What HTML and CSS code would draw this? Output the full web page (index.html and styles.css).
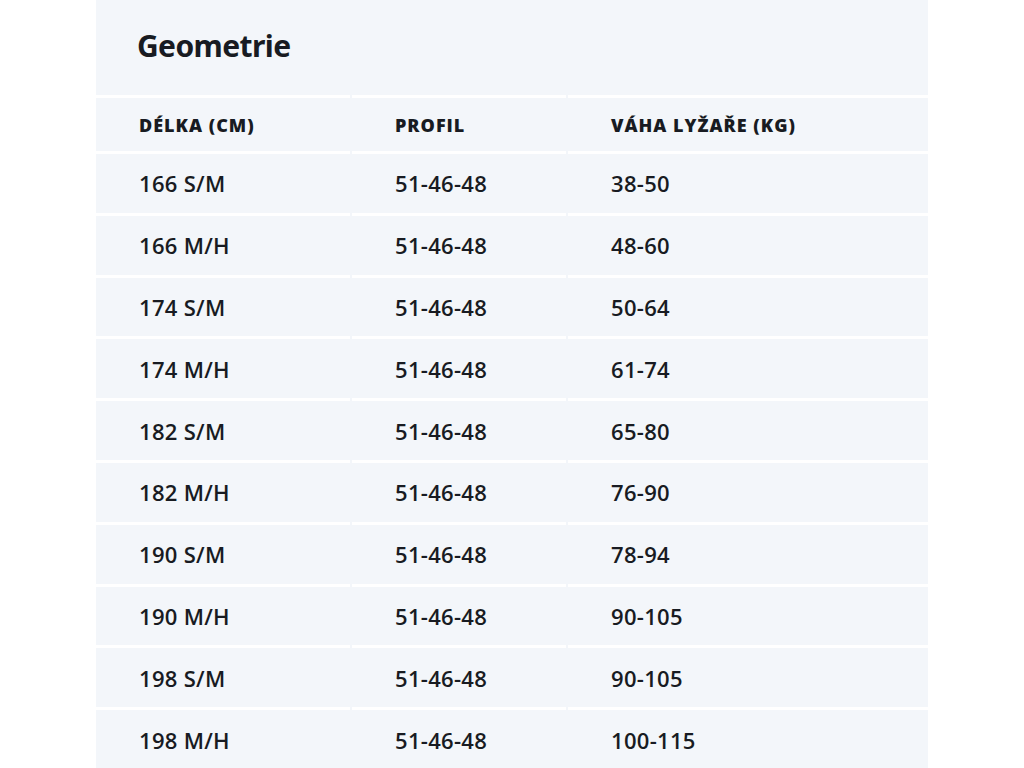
FILE: index.html
```html
<!DOCTYPE html>
<html lang="cs">
<head>
<meta charset="utf-8">
<title>Geometrie</title>
<link rel="stylesheet" href="styles.css">
</head>
<body>
<section class="panel">
  <h2 class="title">Geometrie</h2>
  <table class="geo">
    <colgroup>
      <col class="c1"><col class="c2"><col class="c3">
    </colgroup>
    <thead>
      <tr><th>DÉLKA (CM)</th><th>PROFIL</th><th>VÁHA LYŽAŘE (KG)</th></tr>
    </thead>
    <tbody>
      <tr><td>166 S/M</td><td>51-46-48</td><td>38-50</td></tr>
      <tr><td>166 M/H</td><td>51-46-48</td><td>48-60</td></tr>
      <tr><td>174 S/M</td><td>51-46-48</td><td>50-64</td></tr>
      <tr><td>174 M/H</td><td>51-46-48</td><td>61-74</td></tr>
      <tr><td>182 S/M</td><td>51-46-48</td><td>65-80</td></tr>
      <tr><td>182 M/H</td><td>51-46-48</td><td>76-90</td></tr>
      <tr><td>190 S/M</td><td>51-46-48</td><td>78-94</td></tr>
      <tr><td>190 M/H</td><td>51-46-48</td><td>90-105</td></tr>
      <tr><td>198 S/M</td><td>51-46-48</td><td>90-105</td></tr>
      <tr><td>198 M/H</td><td>51-46-48</td><td>100-115</td></tr>
    </tbody>
  </table>
</section>
</body>
</html>
```

FILE: styles.css
```css
html, body {
  margin: 0;
  padding: 0;
  background: #ffffff;
}
body {
  font-family: "Open Sans", "Noto Sans", sans-serif;
  color: #181b22;
  overflow: hidden;
}
.panel {
  width: 832px;
  margin: 0 auto;
  background: #f3f6fa;
  padding: 24px 0 0;
  min-height: 768px;
  box-sizing: border-box;
}
.title {
  margin: 0 0 27px 41px;
  font-family: "Noto Sans", sans-serif;
  font-size: 30px;
  font-weight: 700;
  line-height: 44px;
  letter-spacing: -0.6px;
}
.geo {
  width: 836px;
  margin-left: -2px;
  border-collapse: separate;
  border-spacing: 2px 0;
  table-layout: fixed;
}
.c1 { width: 254px; }
.c2 { width: 214px; }
.c3 { width: 360px; }
.geo th, .geo td {
  text-align: left;
  border-top: 3px solid #ffffff;
  padding: 0 0 0 43px;
  vertical-align: middle;
}
.geo th {
  height: 53px;
  font-family: "Open Sans", sans-serif;
  font-size: 18px;
  font-weight: 800;
  letter-spacing: 1px;
}
.geo td {
  height: 58.8px;
  font-size: 22px;
  font-weight: 600;
  letter-spacing: 0.3px;
}
```
